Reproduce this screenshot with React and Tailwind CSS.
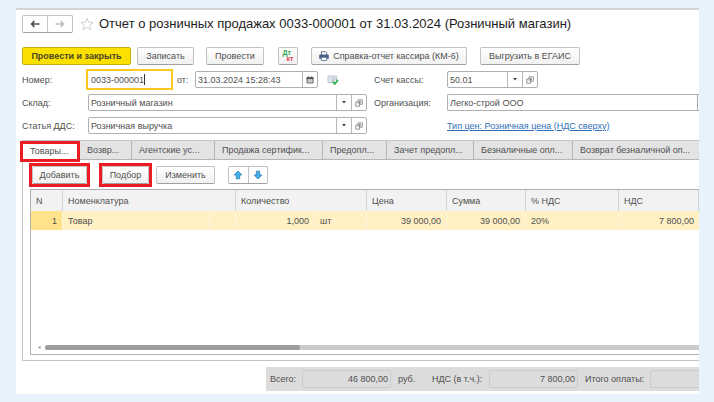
import React, { useState } from 'react';
import clsx from 'clsx';

const tabs = [
  { label: 'Товары...', width: 'w-[57px]' },
  { label: 'Возвр...', width: 'w-[52px]' },
  { label: 'Агентские ус...', width: 'w-[83px]' },
  { label: 'Продажа сертифик...', width: 'w-[108px]' },
  { label: 'Предопл...', width: 'w-[64px]' },
  { label: 'Зачет предопл...', width: 'w-[87px]' },
  { label: 'Безналичные опл...', width: 'w-[99px]' },
  { label: 'Возврат безналичной оп...', width: 'min-w-[127px] flex-1' },
];

/* ---------- Icons ---------- */

const NavArrow = ({ className }) => (
  <svg viewBox="0 0 10 8" className={clsx('h-2 w-2.5', className)} fill="none" stroke="currentColor" strokeWidth="1.7">
    <path d="M9.500 4H1.800M4.400 1.200L1.600 4l2.800 2.800" />
  </svg>
);

const StarIcon = () => (
  <svg viewBox="0 0 14 14" className="h-3.5 w-3.5" fill="none" stroke="#c9cdd2" strokeWidth="0.9" strokeLinejoin="round">
    <path d="M7 1l1.600 4.300 4.600.2-3.600 2.800 1.300 4.500L7 10.200l-3.900 2.600 1.300-4.500L.8 5.500l4.600-.2z" />
  </svg>
);

const PrinterIcon = () => (
  <svg viewBox="0 0 10 10" className="h-2.5 w-2.5">
    <path d="M2.500 4V.7h4l1.200 1.200V4" fill="#fff" stroke="#4d6585" strokeWidth="0.9" />
    <path d="M1.300 3.500h7.400c.7 0 1.100.5 1.100 1.100v3.200H.2V4.600c0-.6.4-1.100 1.100-1.100z" fill="#46618a" />
    <path d="M2.300 6.300h5.400v3.100H2.300z" fill="#fff" stroke="#4d6585" strokeWidth="0.8" />
  </svg>
);

const CalendarIcon = () => (
  <svg viewBox="0 0 8 8" className="h-2 w-2">
    <path d="M1 1.600h6v5.400H1z" fill="#ddd" stroke="#555" strokeWidth="0.9" />
    <path d="M.6 1.200h6.800v2H.6z" fill="#555" />
    <path d="M2.300.3v1.300M5.700.3v1.300" stroke="#555" strokeWidth="0.9" />
    <path d="M2 4.400h4M2 5.700h4" stroke="#999" strokeWidth="0.6" strokeDasharray="0.8 0.6" />
  </svg>
);

const PostedIcon = () => (
  <svg viewBox="0 0 12 10" className="h-2.5 w-3" fill="none">
    <path d="M1 1h8.500v6.500H1z" fill="#f4f8fb" stroke="#a3b2bf" strokeWidth="0.8" />
    <path d="M2.500 2.800h1M2.500 4.200h1M2.500 5.600h1M4.500 2.800h4M4.500 4.200h4M4.500 5.600h3" stroke="#8fa3b3" strokeWidth="0.7" />
    <path d="M5.500 6.700l2.300 2.200 3.200-4" stroke="#35b257" strokeWidth="1.800" />
  </svg>
);

const OpenIcon = () => (
  <svg viewBox="0 0 8 8" className="h-2 w-2" fill="#fff" stroke="#777" strokeWidth="0.8">
    <path d="M3 .8h4.300v4.400H3z" />
    <path d="M.8 3h3.800v4.200H.8z" />
    <path d="M2.800 5l2.600-2.600M3.700 2.400h1.700v1.700" fill="none" strokeWidth="0.7" />
  </svg>
);

const CaretIcon = () => (
  <svg viewBox="0 0 4 3" className="h-[3px] w-1" fill="#444">
    <path d="M0 0h4L2 2.600z" />
  </svg>
);

const MoveArrow = ({ className }) => (
  <svg viewBox="0 0 10 10" className={clsx('h-2.5 w-2.5', className)}>
    <path d="M5 1l3.900 4H6.700v3.800H3.300V5H1.100z" fill="#45b0ea" stroke="#2b7fb8" strokeWidth="0.8" strokeLinejoin="round" />
  </svg>
);

/* ---------- Controls ---------- */

const Button = ({ primary, className, children, ...rest }) => (
  <button
    type="button"
    className={clsx(
      'flex h-[18px] shrink-0 items-center justify-center gap-1 rounded-[2px] border whitespace-nowrap',
      primary
        ? 'border-[#c9ae10] bg-[#fbe000] font-bold text-[#4a4520]'
        : 'border-[#c2c2c2] border-b-[#a0a0a0] bg-gradient-to-b from-white to-[#f0f0f0]',
      className
    )}
    {...rest}
  >
    {children}
  </button>
);

// Text field with optional side buttons; an editing field shows a text cursor
const Field = ({ id, value, editing, className, children }) => (
  <div className={clsx('flex h-[17px] rounded-[2px] border bg-white', className)}>
    <input
      id={id}
      defaultValue={value}
      className={clsx('min-w-0 outline-none', editing ? 'field-sizing-content pl-0.5' : 'flex-1 px-0.5')}
    />
    {editing && <span className="my-0.5 w-px bg-[#333]" />}
    {children}
  </div>
);

const FieldButton = ({ label, children }) => (
  <button type="button" aria-label={label} className="flex w-[15px] shrink-0 items-center justify-center border-l border-[#b8b8b8]">
    {children}
  </button>
);

const SelectButtons = () => (
  <>
    <FieldButton label="Выбрать"><CaretIcon /></FieldButton>
    <FieldButton label="Открыть"><OpenIcon /></FieldButton>
  </>
);

// Red frame drawn over a highlighted control
const Mark = ({ className }) => (
  <span className={clsx('pointer-events-none absolute z-10 border-[3px] border-[#ec1c24]', className)} />
);

const Total = ({ id, label, value, className, boxClass }) => (
  <>
    <label htmlFor={id} className={clsx('shrink-0', className)}>{label}</label>
    <output id={id} className={clsx('h-[18px] shrink-0 rounded-[2px] border border-[#cbcbcb] px-0.5 text-right leading-4', boxClass)}>
      {value}
    </output>
  </>
);

const head = 'border-l border-[#d4d4d4] px-[5px] text-left font-normal';
const cell = 'border-l border-[#fdf6dc] px-[5px]';

const App = () => {
  const [activeTab, setActiveTab] = useState(0);

  return (
    <div className="min-h-screen bg-[#e7f2fc] py-2 pr-[15px] pl-4 font-['Liberation_Sans',Arial,sans-serif] text-[9px] leading-3 text-[#505050]">
      <main className="overflow-hidden border-t-2 border-[#d0d5d8] bg-white pb-[3px] pl-1.5">
        {/* Title */}
        <header className="flex h-[27px] items-center">
          <div className="flex h-[18px] w-[51px] rounded-[2px] border border-[#c2c2c2] border-b-[#a0a0a0]">
            <button type="button" aria-label="Назад" className="flex flex-1 items-center justify-center text-[#505050]">
              <NavArrow />
            </button>
            <button type="button" aria-label="Вперед" className="flex flex-1 items-center justify-center border-l border-[#c4c4c4] text-[#bdbdbd]">
              <NavArrow className="rotate-180" />
            </button>
          </div>
          <button type="button" aria-label="В избранное" className="ml-[7px]">
            <StarIcon />
          </button>
          <h1 className="ml-[5px] text-[13px] leading-4 whitespace-nowrap text-[#1c1c1c]">
            Отчет о розничных продажах 0033-000001 от 31.03.2024 (Розничный магазин)
          </h1>
        </header>

        {/* Commands */}
        <div className="mt-2.5 flex">
          <Button primary className="w-[109px]">Провести и закрыть</Button>
          <Button className="ml-1.5 w-[57px]">Записать</Button>
          <Button className="ml-3 w-[58px]">Провести</Button>
          <Button className="ml-3.5 w-5 text-[7px] leading-[6px] font-bold">
            <span className="flex flex-col">
              <span className="text-left text-[#2fa84f]">Дт</span>
              <span className="pl-1 text-[#e2444a]">кт</span>
            </span>
          </Button>
          <Button className="ml-[13px] w-[156px]">
            <PrinterIcon />
            Справка-отчет кассира (КМ-6)
          </Button>
          <Button className="ml-[13px] w-[100px]">Выгрузить в ЕГАИС</Button>
        </div>

        {/* Document fields */}
        <form className="mt-1.5 grid grid-cols-[66px_279px_80px_minmax(0,1fr)] items-center gap-y-1.5">
          <label htmlFor="number">Номер:</label>
          <div className="flex items-center">
            <Field id="number" value="0033-000001" editing className="w-[83px] rounded-none border-transparent ring-2 ring-[#fbc91f]" />
            <label htmlFor="date" className="ml-1.5 w-[18px]">от:</label>
            <Field id="date" value="31.03.2024 15:28:43" className="w-[123px] border-[#b0b0b0]">
              <FieldButton label="Календарь"><CalendarIcon /></FieldButton>
            </Field>
            <span className="ml-[9px]"><PostedIcon /></span>
          </div>
          <label htmlFor="account" className="pl-[7px]">Счет кассы:</label>
          <Field id="account" value="50.01" className="w-[91px] border-[#b0b0b0]">
            <SelectButtons />
          </Field>

          <label htmlFor="store">Склад:</label>
          <Field id="store" value="Розничный магазин" className="border-[#b0b0b0]">
            <SelectButtons />
          </Field>
          <label htmlFor="org" className="pl-[7px]">Организация:</label>
          <Field id="org" value="Легко-строй ООО" className="rounded-r-none border-r-0 border-[#b0b0b0]">
            <span className="w-0.5 border-l border-[#a8a8a8]" />
          </Field>

          <label htmlFor="dds">Статья ДДС:</label>
          <Field id="dds" value="Розничная выручка" className="border-[#b0b0b0]">
            <SelectButtons />
          </Field>
          <a href="#price" className="col-start-4 text-[#2f6fb5] underline">
            Тип цен: Розничная цена (НДС сверху)
          </a>
        </form>

        {/* Tabs */}
        <div role="tablist" className="mt-1.5 flex h-5 border-t border-[#c4c4c4]">
          {tabs.map((tab, i) => (
            <button
              key={tab.label}
              type="button"
              role="tab"
              aria-selected={i === activeTab}
              onClick={() => setActiveTab(i)}
              className={clsx(
                'relative shrink-0 border-l border-[#b5b5b5] pl-[7px] text-left whitespace-nowrap',
                tab.width,
                i === activeTab ? 'bg-white' : 'border-b bg-[#e3e3e3]'
              )}
            >
              {tab.label}
              {i === 0 && <Mark className="top-0 -right-px -bottom-0.5 -left-[3px]" />}
            </button>
          ))}
        </div>

        <section className="border-b border-l border-[#c4c4c4] pb-[5px] pl-[7px]">
          <div className="flex h-[29px] items-center">
            <div className="relative ml-0.5">
              <Button className="w-[55px]">Добавить</Button>
              <Mark className="-inset-[3px]" />
            </div>
            <div className="relative ml-[15px]">
              <Button className="w-[47px]">Подбор</Button>
              <Mark className="-inset-[3px]" />
            </div>
            <Button className="ml-[7px] w-[59px]">Изменить</Button>
            <div className="ml-[13px] flex h-[18px] w-10 rounded-[2px] border border-[#c2c2c2] border-b-[#a0a0a0]">
              <button type="button" aria-label="Вверх" className="flex flex-1 items-center justify-center">
                <MoveArrow />
              </button>
              <button type="button" aria-label="Вниз" className="flex flex-1 items-center justify-center border-l border-[#c4c4c4]">
                <MoveArrow className="rotate-180" />
              </button>
            </div>
          </div>

          <div className="border-y border-l border-[#b0b0b0]">
            <div className="h-[155px]">
              <table className="w-full table-fixed border-separate border-spacing-0">
                <colgroup>
                  <col className="w-[31px]" />
                  <col className="w-[147px]" />
                  <col className="w-[26px]" />
                  <col className="w-[79px]" />
                  <col className="w-[52px]" />
                  <col className="w-[80px]" />
                  <col className="w-[79px]" />
                  <col className="w-[93px]" />
                  <col />
                </colgroup>
                <thead>
                  <tr className="h-[21px] bg-[#f2f2f2]">
                    <th className="px-[5px] text-left font-normal">N</th>
                    <th colSpan={2} className={head}>Номенклатура</th>
                    <th colSpan={2} className={head}>Количество</th>
                    <th className={head}>Цена</th>
                    <th className={head}>Сумма</th>
                    <th className={head}>% НДС</th>
                    <th className={clsx(head, 'border-r')}>НДС</th>
                  </tr>
                </thead>
                <tbody>
                  <tr className="h-[19px] bg-[#fff1c4] text-right">
                    <td className="bg-[#ffe28a] px-[5px]">1</td>
                    <td className={clsx(cell, 'text-left')}>Товар</td>
                    <td className={cell} />
                    <td className={cell}>1,000</td>
                    <td className={clsx(cell, 'text-left')}>шт</td>
                    <td className={cell}>39 000,00</td>
                    <td className={cell}>39 000,00</td>
                    <td className={clsx(cell, 'text-left')}>20%</td>
                    <td className={cell}>7 800,00</td>
                  </tr>
                </tbody>
              </table>
            </div>
            {/* Horizontal scroll */}
            <div className="flex h-[9px] items-start pl-1.5">
              <svg viewBox="0 0 4 5" className="mr-1 h-[5px] w-1" fill="#a0a0a0">
                <path d="M3.500.8v3.400L1 2.500z" />
              </svg>
              <div className="h-[5px] flex-1 rounded-l-full bg-[#cbcbcb]">
                <div className="h-full w-[39%] rounded-full bg-[#9d9d9d]" />
              </div>
            </div>
          </div>
        </section>

        {/* Totals */}
        <footer className="mt-1.5 ml-[244px] flex h-6 items-center bg-[#dcdcdc] pl-1 whitespace-nowrap">
          <Total id="total" label="Всего:" value="46 800,00" className="w-8" boxClass="w-[89px]" />
          <span className="ml-[7px] w-[34px] shrink-0">руб.</span>
          <Total id="vat" label="НДС (в т.ч.):" value="7 800,00" className="w-[57px]" boxClass="w-[89px]" />
          <Total id="pay" label="Итого оплаты:" value="" className="ml-[7px] w-[65px]" boxClass="w-[89px]" />
        </footer>
      </main>
    </div>
  );
};

export default App;
